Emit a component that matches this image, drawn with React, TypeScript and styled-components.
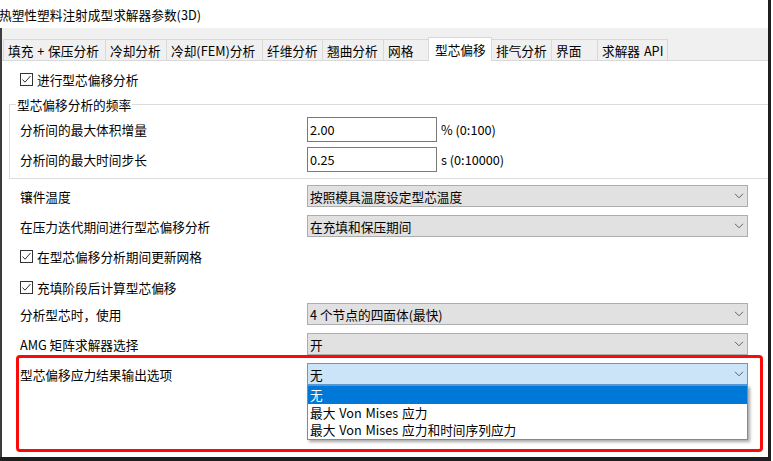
import React from "react";
import styled, { createGlobalStyle } from "styled-components";

const GlobalStyle = createGlobalStyle`
  html, body { margin: 0; padding: 0; background: #fff; }
  body {
    font-family: "Noto Sans CJK SC", "Noto Sans", sans-serif;
    font-size: 12.7px;
    color: #000;
  }
  #root { width: 773px; height: 461px; overflow: hidden; }
  * { box-sizing: border-box; }
`;

const Frame = styled.div`
  width: 771px;
  height: 461px;
  display: flex;
  flex-direction: column;
  border-right: 3px solid #1e1e1e;
  border-bottom: 4px solid #1e1e1e;
  overflow: hidden;
  background: #fff;
`;

const TitleBar = styled.div`
  height: 28px;
  flex: none;
  display: flex;
  align-items: center;
  padding-left: 0;
  white-space: nowrap;
`;

const TitleText = styled.span`
  margin-left: -1px;
`;

const Body = styled.div`
  flex: 1;
  min-height: 0;
  display: flex;
  flex-direction: column;
  border-left: 2px solid #3c3c3c;
`;

const TabStrip = styled.div`
  height: 33px;
  flex: none;
  background: #f0f0f0;
  border-bottom: 1px solid #d9d9d9;
  display: flex;
  align-items: flex-end;
  padding-left: 1px;
`;

const Tab = styled.div<{ $w: number; $active?: boolean }>`
  width: ${(p) => p.$w}px;
  height: ${(p) => (p.$active ? 24 : 21)}px;
  margin-bottom: ${(p) => (p.$active ? -1 : 0)}px;
  margin-left: -1px;
  &:first-child { margin-left: 0; }
  border: 1px solid #d9d9d9;
  border-bottom: none;
  background: ${(p) => (p.$active ? "#fff" : "#f0f0f0")};
  position: relative;
  z-index: ${(p) => (p.$active ? 1 : 0)};
  display: flex;
  align-items: center;
  padding: ${(p) => (p.$active ? "0 0 0 6px" : "1px 0 0 4px")};
  white-space: nowrap;
  word-spacing: 1px;
`;

const Content = styled.div`
  flex: 1;
  min-height: 0;
  background: #fff;
  padding: 3px 0 0 7px;
  display: flex;
  flex-direction: column;
`;

const CheckRow = styled.div<{ $mt?: number }>`
  height: 30px;
  flex: none;
  margin-top: ${(p) => p.$mt ?? 0}px;
  display: flex;
  align-items: center;
  gap: 4px;
  padding-left: 11px;
  white-space: nowrap;
`;

const CheckBox = styled.span`
  width: 13px;
  height: 13px;
  border: 1px solid #333;
  background: #fff;
  display: flex;
  align-items: center;
  justify-content: center;
`;

const GroupBox = styled.div`
  margin-top: 10px;
  flex: none;
  border: 1px solid #dcdcdc;
  border-right: none;
  padding: 0 0 6px 0;
  display: flex;
  flex-direction: column;
`;

const Legend = styled.div`
  align-self: flex-start;
  margin: -9px 0 0 6px;
  padding: 0 1px;
  height: 17px;
  line-height: 17px;
  background: #fff;
  white-space: nowrap;
`;

const FieldRow = styled.div<{ $mt: number }>`
  display: grid;
  grid-template-columns: 287px 130px auto;
  align-items: center;
  height: 25px;
  margin-top: ${(p) => p.$mt}px;
  padding-left: 10px;
  white-space: nowrap;
`;

const TextInput = styled.div`
  height: 25px;
  border: 1px solid #7a7a7a;
  background: #fff;
  display: flex;
  align-items: center;
  padding: 0 0 1px 2px;
`;

const Unit = styled.span`
  margin-left: 4px;
`;

const SelectRow = styled.div<{ $mt?: number }>`
  display: grid;
  grid-template-columns: 287px 441px;
  align-items: center;
  height: 22px;
  flex: none;
  margin-top: ${(p) => p.$mt ?? 0}px;
  padding-left: 11px;
  white-space: nowrap;
`;

const Select = styled.div<{ $open?: boolean }>`
  position: relative;
  height: 22px;
  border: 1px solid ${(p) => (p.$open ? "#5a9ad6" : "#adadad")};
  background: ${(p) => (p.$open ? "#cce4f7" : "#e1e1e1")};
  display: flex;
  align-items: center;
  justify-content: space-between;
  padding: 0 3px 0 2px;
`;

const Highlight = styled.div`
  flex: none;
  margin-left: 7px;
  width: 747px;
  height: 97px;
  border: 3px solid #fb0a0a;
  border-radius: 4px;
  padding: 5px 0 0 1px;
`;

const HighlightRow = styled(SelectRow)`
  padding-left: 0;
`;

const Popup = styled.div`
  position: absolute;
  top: calc(100% + 1px);
  left: -1px;
  right: -1px;
  background: #fff;
  border: 1px solid #5b93cf;
  box-shadow: 2px 2px 3px rgba(0, 0, 0, 0.35);
  display: flex;
  flex-direction: column;
  z-index: 2;
`;

const Option = styled.div<{ $selected?: boolean }>`
  height: 17.5px;
  line-height: 17px;
  display: flex;
  align-items: center;
  padding-left: 2px;
  word-spacing: 1px;
  background: ${(p) => (p.$selected ? "#0078d7" : "#fff")};
  color: ${(p) => (p.$selected ? "#fff" : "#000")};
`;

const Chevron = () => (
  <svg width="10" height="6" viewBox="0 0 10 6">
    <polyline points="1,0.8 5,4.8 9,0.8" fill="none" stroke="#606060" strokeWidth="1" />
  </svg>
);

const Check = () => (
  <CheckBox>
    <svg width="11" height="11" viewBox="0 0 11 11">
      <polyline points="1.5,5.5 4,8.2 9.5,2" fill="none" stroke="#333" strokeWidth="1" />
    </svg>
  </CheckBox>
);

const tabs: { label: string; w: number; active?: boolean }[] = [
  { label: "填充 + 保压分析", w: 103 },
  { label: "冷却分析", w: 62 },
  { label: "冷却(FEM)分析", w: 97 },
  { label: "纤维分析", w: 61 },
  { label: "翘曲分析", w: 62 },
  { label: "网格", w: 46 },
  { label: "型芯偏移", w: 64, active: true },
  { label: "排气分析", w: 61 },
  { label: "界面", w: 47 },
  { label: "求解器 API", w: 71 },
];

export default function App() {
  return (
    <>
      <GlobalStyle />
      <Frame>
        <TitleBar>
          <TitleText>热塑性塑料注射成型求解器参数(3D)</TitleText>
        </TitleBar>
        <Body>
          <TabStrip>
            {tabs.map((t) => (
              <Tab key={t.label} $w={t.w} $active={t.active}>
                {t.label}
              </Tab>
            ))}
          </TabStrip>
          <Content>
            <CheckRow>
              <Check />
              <span>进行型芯偏移分析</span>
            </CheckRow>
            <GroupBox>
              <Legend>型芯偏移分析的频率</Legend>
              <FieldRow $mt={4}>
                <span>分析间的最大体积增量</span>
                <TextInput>2.00</TextInput>
                <Unit>% (0:100)</Unit>
              </FieldRow>
              <FieldRow $mt={5}>
                <span>分析间的最大时间步长</span>
                <TextInput>0.25</TextInput>
                <Unit>s (0:10000)</Unit>
              </FieldRow>
            </GroupBox>
            <SelectRow $mt={6}>
              <span>镶件温度</span>
              <Select>
                <span>按照模具温度设定型芯温度</span>
                <Chevron />
              </Select>
            </SelectRow>
            <SelectRow $mt={8}>
              <span>在压力迭代期间进行型芯偏移分析</span>
              <Select>
                <span>在充填和保压期间</span>
                <Chevron />
              </Select>
            </SelectRow>
            <CheckRow $mt={4}>
              <Check />
              <span>在型芯偏移分析期间更新网格</span>
            </CheckRow>
            <CheckRow $mt={1}>
              <Check />
              <span>充填阶段后计算型芯偏移</span>
            </CheckRow>
            <SelectRow $mt={1}>
              <span>分析型芯时，使用</span>
              <Select>
                <span>4 个节点的四面体(最快)</span>
                <Chevron />
              </Select>
            </SelectRow>
            <SelectRow $mt={8}>
              <span>AMG 矩阵求解器选择</span>
              <Select>
                <span>开</span>
                <Chevron />
              </Select>
            </SelectRow>
            <Highlight>
              <HighlightRow>
                <span>型芯偏移应力结果输出选项</span>
                <Select $open>
                  <span>无</span>
                  <Chevron />
                  <Popup>
                    <Option $selected>无</Option>
                    <Option>最大 Von Mises 应力</Option>
                    <Option>最大 Von Mises 应力和时间序列应力</Option>
                  </Popup>
                </Select>
              </HighlightRow>
            </Highlight>
          </Content>
        </Body>
      </Frame>
    </>
  );
}
